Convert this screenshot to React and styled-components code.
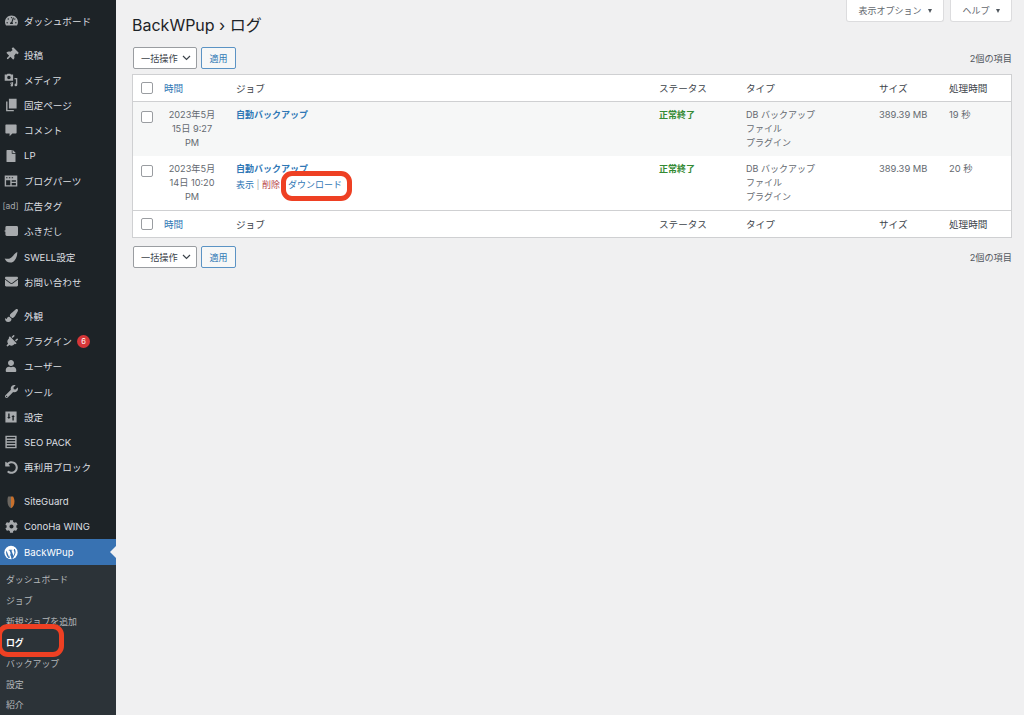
import React from "react";
import styled, { createGlobalStyle } from "styled-components";
import { FaTachometerAlt, FaThumbtack, FaPaintBrush, FaPlug, FaUser, FaWrench, FaUndoAlt, FaCog, FaFile, FaEnvelope } from "react-icons/fa";

const FONT = `Inter, "Liberation Sans", "Noto Sans CJK JP", sans-serif`;

const Global = createGlobalStyle`
  html, body { margin: 0; padding: 0; height: 715px; overflow: hidden; background: #f0f0f1; }
  body { font-family: ${FONT}; font-size: 9.6px; color: #50575e; }
  * { box-sizing: border-box; }
`;

const Page = styled.div`
  position: relative;
  display: flex;
  width: 1024px;
  height: 715px;
  overflow: hidden;
`;

// Sidebar
const Sidebar = styled.nav`
  flex: 0 0 116px;
  background: #1d2327;
  padding-top: 8px;
  height: 715px;
  overflow: hidden;
`;
const MenuGroup = styled.div`
  margin-bottom: ${({ $gap }) => $gap || 0}px;
`;
const MenuItem = styled.div`
  position: relative;
  display: flex;
  align-items: center;
  height: 25.25px;
  padding-left: 4px;
  gap: 6px;
  color: ${({ $active }) => ($active ? "#fff" : "#dcdfe1")};
  background: ${({ $active }) => ($active ? "#3872b2" : "transparent")};
  white-space: nowrap;
  ${({ $active }) =>
    $active &&
    `&::after {
      content: "";
      position: absolute;
      right: 0;
      top: 50%;
      margin-top: -6px;
      border: 6px solid transparent;
      border-right-color: #f0f0f1;
      border-left: 0;
    }`}
`;
const IconSlot = styled.span`
  flex: 0 0 14px;
  width: 14px;
  height: 14px;
  display: flex;
  align-items: center;
  justify-content: center;
  color: ${({ $active }) => ($active ? "#fff" : "#a7aaad")};
  font-size: 13px;
  svg { display: block; }
`;
const AdMark = styled.span`
  font-size: 8.5px;
  margin-left: -1px;
  white-space: nowrap;
  color: #a7aaad;
`;
const Badge = styled.span`
  display: inline-flex;
  align-items: center;
  justify-content: center;
  width: 13px;
  height: 13px;
  border-radius: 50%;
  background: #d63638;
  color: #fff;
  font-size: 7.5px;
  margin-left: -1px;
`;
const SubMenu = styled.div`
  background: #2c3338;
  padding-top: 4.5px;
`;
const SubItem = styled.div`
  display: flex;
  align-items: center;
  height: 20.9px;
  padding-left: 6px;
  font-size: 8.9px;
  color: ${({ $current }) => ($current ? "#fff" : "#b4b8bb")};
  font-weight: ${({ $current }) => ($current ? 700 : 400)};
`;

// Main column
const Main = styled.main`
  flex: 1;
  position: relative;
  padding: 0 12px 0 16px;
`;
const TopTabs = styled.div`
  display: flex;
  justify-content: flex-end;
  gap: 6px;
  height: 22px;
`;
const Tab = styled.div`
  display: flex;
  align-items: center;
  justify-content: center;
  gap: 6px;
  width: ${({ $w }) => $w}px;
  height: 22px;
  background: #fff;
  border: 1px solid #dcdcde;
  border-top: 0;
  border-radius: 0 0 3px 3px;
  color: #646970;
  font-size: 9px;
`;
const Caret = styled.span`
  width: 0;
  height: 0;
  border-left: 2.5px solid transparent;
  border-right: 2.5px solid transparent;
  border-top: 4px solid #50575e;
`;
const Title = styled.h1`
  margin: -9px 0 0;
  height: 25px;
  line-height: 25px;
  font-size: 16px;
  font-weight: 400;
  color: #1d2327;
`;
const Bar = styled.div`
  display: flex;
  align-items: center;
  gap: 4px;
  height: 22px;
  margin: ${({ $m }) => $m};
  padding-left: 1px;
`;
const Select = styled.div`
  display: flex;
  align-items: center;
  justify-content: space-between;
  width: 64px;
  height: 22px;
  padding: 0 5px 0 7px;
  background: #fff;
  border: 1px solid #9a9da1;
  border-radius: 2px;
  color: #3c434a;
  font-size: 9.2px;
`;
const ApplyButton = styled.div`
  display: flex;
  align-items: center;
  justify-content: center;
  width: 35px;
  height: 22px;
  background: #f6f7f7;
  border: 1px solid #5b93c4;
  border-radius: 2px;
  color: #2f77b5;
  font-size: 9px;
`;
const Count = styled.span`
  margin-left: auto;
  color: #50575e;
  font-size: 9.2px;
`;
const Table = styled.table`
  width: 880px;
  table-layout: fixed;
  border-collapse: separate;
  border-spacing: 0;
  background: #fff;
  border: 1px solid #cfd0d2;
`;
const Head = styled.th`
  height: 27px;
  padding: 0 8px;
  text-align: left;
  font-weight: 400;
  color: #3c434a;
  border-bottom: ${({ $foot }) => ($foot ? "0" : "1px solid #cfd0d2")};
  border-top: ${({ $foot }) => ($foot ? "1px solid #cfd0d2" : "0")};
`;
const Row = styled.tr`
  background: ${({ $alt }) => ($alt ? "#f6f7f7" : "#fff")};
`;
const Cell = styled.td`
  padding: 6px 8px;
  vertical-align: top;
  font-size: ${({ $size }) => $size || 9}px;
  line-height: 14px;
  color: #646970;
  text-align: ${({ $center }) => ($center ? "center" : "left")};
`;
const Line = styled.div`
  height: 14px;
  white-space: nowrap;
`;
const Actions = styled(Line)`
  margin-top: 2px;
`;
const Check = styled.span`
  display: block;
  width: 12px;
  height: 12px;
  margin-top: ${({ $top }) => $top || 0}px;
  background: #fff;
  border: 1px solid #9a9da1;
  border-radius: 2px;
`;
const Link = styled.span`
  color: #2f77b5;
  font-weight: ${({ $strong }) => ($strong ? 600 : 400)};
`;
const Danger = styled.span`
  color: #b8484a;
`;
const Success = styled.strong`
  color: #348a34;
  font-weight: 700;
`;
const Sep = styled.span`
  color: #a7aaad;
  margin: 0 2.5px;
`;
const Callout = styled.div`
  position: absolute;
  left: ${({ $x }) => $x}px;
  top: ${({ $y }) => $y}px;
  width: ${({ $w }) => $w}px;
  height: ${({ $h }) => $h}px;
  border: 5px solid #ee4023;
  border-radius: 11px;
  pointer-events: none;
`;

const Svg = ({ children, vb = "0 0 20 20" }) => (
  <svg width="14" height="14" viewBox={vb} fill="currentColor">{children}</svg>
);

const MediaIcon = () => (
  <Svg><path d="M1 2h3l1-1h4l1 1h3v9H1V2zm6 2a2.5 2.5 0 100 5 2.5 2.5 0 000-5zM15 7h4v10a2 2 0 11-2-2V9h-2V7zM9 14l4-1v4.5a1.8 1.8 0 11-1.6-1.8V15l-2.4.6V14z" fillRule="evenodd" /></Svg>
);
const PagesIcon = () => (
  <Svg><path d="M7 1h11v14H7zM3 5h2v12h9v2H3z" /></Svg>
);
const CommentIcon = () => (
  <Svg><path d="M3 2h14a1 1 0 011 1v11a1 1 0 01-1 1h-5l-4 4v-4H3a1 1 0 01-1-1V3a1 1 0 011-1z" /></Svg>
);
const PartsIcon = () => (
  <Svg><path fillRule="evenodd" d="M1 2h18v16H1zM3 4.500v1.500h2V4.500zm4 0v1.500h2V4.500zm4 0v1.500h2V4.500zM3 9v7h6V9zm8 0v2h6V9zm0 4v3h6v-3z" /></Svg>
);
const BubbleIcon = () => (
  <Svg><path d="M4 3h14a2 2 0 012 2v10a2 2 0 01-2 2H4a2 2 0 01-2-2v-4l-2-1 2-1V5a2 2 0 012-2z" /></Svg>
);
const SwellIcon = () => (
  <Svg><path d="M19 3c0 8-4 15-10 15-4 0-7-3-8-6 3 1 6 1 9-1s5-6 9-8z" /></Svg>
);
const SettingsIcon = () => (
  <Svg><path fillRule="evenodd" d="M2 2h16v16H2zM6 5v5H4.500L7 13l2.500-3H8V5zm6 10v-5h-1.500L13 7l2.500 3H14v5z" /></Svg>
);
const ListIcon = () => (
  <Svg><path fillRule="evenodd" d="M2 1h16v18H2zM4 3v2h12V3zm0 4v2h12V7zm0 4v2h12v-2zm0 4v2h12v-2z" /></Svg>
);
const GuardIcon = () => (
  <svg width="14" height="14" viewBox="0 0 20 20">
    <path d="M6 2h4v17C7 18 5 14 5 9c0-3 0-5 1-7z" fill="#6b6660" />
    <path d="M10 2h3c1 2 2 4 2 7 0 5-2 9-5 10z" fill="#c8702c" />
  </svg>
);
const WpIcon = () => (
  <svg width="15" height="15" viewBox="0 0 20 20">
    <circle cx="10" cy="10" r="9.500" fill="#fff" />
    <path d="M3.500 7l4 10 2-6-1.500-4H6.800V6h5v1h-1.200l3 8 1.200-4c.5-2-.5-3-.8-4-.2-1 .5-2 1.500-2l1 3c.5 3-.5 5-4 11h-2L9.500 13l-1.500 5H6.500C4 15 2 11 3.500 7z" fill="#3872b2" />
  </svg>
);

const menu = [
  { gap: 8.8, items: [["ダッシュボード", <FaTachometerAlt />]] },
  {
    gap: 8.8,
    items: [
      ["投稿", <FaThumbtack style={{ transform: "rotate(45deg)" }} />],
      ["メディア", <MediaIcon />],
      ["固定ページ", <PagesIcon />],
      ["コメント", <CommentIcon />],
      ["LP", <FaFile size={12} />],
      ["ブログパーツ", <PartsIcon />],
      ["広告タグ", <AdMark>[ad]</AdMark>],
      ["ふきだし", <BubbleIcon />],
      ["SWELL設定", <SwellIcon />],
      ["お問い合わせ", <FaEnvelope />],
    ],
  },
  {
    gap: 8.8,
    items: [
      ["外観", <FaPaintBrush />],
      ["プラグイン", <FaPlug style={{ transform: "rotate(45deg)" }} />, 6],
      ["ユーザー", <FaUser size={12} />],
      ["ツール", <FaWrench />],
      ["設定", <SettingsIcon />],
      ["SEO PACK", <ListIcon />],
      ["再利用ブロック", <FaUndoAlt />],
    ],
  },
  {
    gap: 0,
    items: [
      ["SiteGuard", <GuardIcon />],
      ["ConoHa WING", <FaCog />],
    ],
  },
];

const subMenu = ["ダッシュボード", "ジョブ", "新規ジョブを追加", "ログ", "バックアップ", "設定", "紹介"];

const rows = [
  { date: ["2023年5月", "15日 9:27", "PM"], time: "19 秒", alt: true },
  { date: ["2023年5月", "14日 10:20", "PM"], time: "20 秒", actions: true },
];

const HeaderRow = ({ foot }) => (
  <tr>
    <Head $foot={foot}><Check /></Head>
    <Head $foot={foot}><Link>時間</Link></Head>
    <Head $foot={foot}>ジョブ</Head>
    <Head $foot={foot}>ステータス</Head>
    <Head $foot={foot}>タイプ</Head>
    <Head $foot={foot}>サイズ</Head>
    <Head $foot={foot}>処理時間</Head>
  </tr>
);

const BulkBar = ({ m }) => (
  <Bar $m={m}>
    <Select>
      一括操作
      <svg width="9" height="6" viewBox="0 0 9 6" fill="none" stroke="#3c434a" strokeWidth="1.200"><path d="M1 1l3.500 3.500L8 1" /></svg>
    </Select>
    <ApplyButton>適用</ApplyButton>
    <Count>2個の項目</Count>
  </Bar>
);

export default function App() {
  return (
    <Page>
      <Global />
      <Sidebar>
        {menu.map((group, i) => (
          <MenuGroup key={i} $gap={group.gap}>
            {group.items.map(([label, icon, badge]) => (
              <MenuItem key={label}>
                <IconSlot>{icon}</IconSlot>
                {label}
                {badge && <Badge>{badge}</Badge>}
              </MenuItem>
            ))}
          </MenuGroup>
        ))}
        <MenuItem $active>
          <IconSlot $active><WpIcon /></IconSlot>
          BackWPup
        </MenuItem>
        <SubMenu>
          {subMenu.map((label) => (
            <SubItem key={label} $current={label === "ログ"}>{label}</SubItem>
          ))}
        </SubMenu>
      </Sidebar>

      <Main>
        <TopTabs>
          <Tab $w={98}>表示オプション <Caret /></Tab>
          <Tab $w={62}>ヘルプ <Caret /></Tab>
        </TopTabs>
        <Title>BackWPup › ログ</Title>
        <BulkBar m="9px 0 5px" />
        <Table>
          <colgroup>
            <col style={{ width: 23 }} />
            <col style={{ width: 72 }} />
            <col style={{ width: 423 }} />
            <col style={{ width: 87 }} />
            <col style={{ width: 133 }} />
            <col style={{ width: 70 }} />
            <col />
          </colgroup>
          <thead><HeaderRow /></thead>
          <tbody>
            {rows.map((row) => (
              <Row key={row.time} $alt={row.alt}>
                <Cell><Check $top={3} /></Cell>
                <Cell $center $size={9.2}>{row.date.map((d) => <Line key={d}>{d}</Line>)}</Cell>
                <Cell>
                  <Line><Link $strong>自動バックアップ</Link></Line>
                  {row.actions && (
                    <Actions>
                      <Link>表示</Link><Sep>|</Sep><Danger>削除</Danger><Sep>|</Sep><Link>ダウンロード</Link>
                    </Actions>
                  )}
                </Cell>
                <Cell><Success>正常終了</Success></Cell>
                <Cell>
                  <Line>DB バックアップ</Line>
                  <Line>ファイル</Line>
                  <Line>プラグイン</Line>
                </Cell>
                <Cell $size={9.4}>389.39 MB</Cell>
                <Cell $size={9.4}>{row.time}</Cell>
              </Row>
            ))}
          </tbody>
          <tfoot><HeaderRow foot /></tfoot>
        </Table>
        <BulkBar m="8px 0 0" />
      </Main>

      <Callout $x={281} $y={171} $w={71} $h={30} />
      <Callout $x={-3} $y={624} $w={67} $h={33} />
    </Page>
  );
}
